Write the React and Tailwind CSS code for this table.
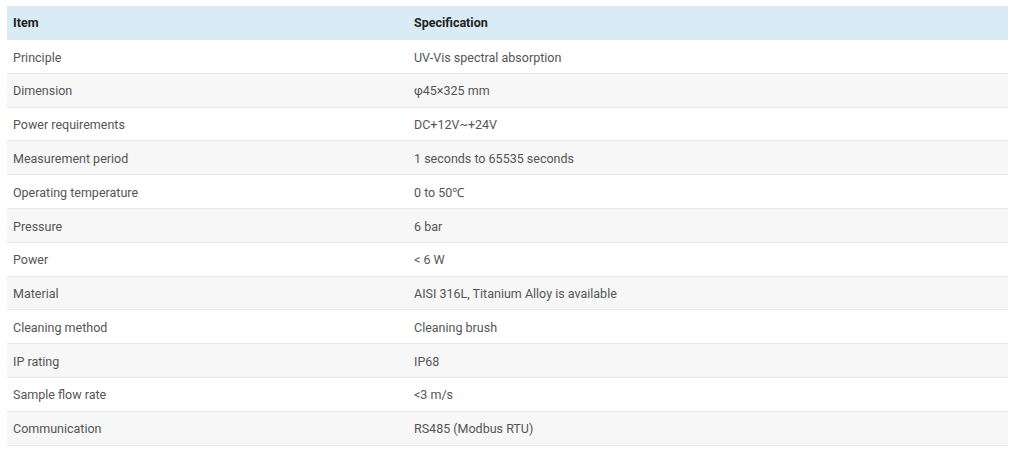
const rows = [
  ['Principle', 'UV-Vis spectral absorption'],
  ['Dimension', 'φ45×325 mm'],
  ['Power requirements', 'DC+12V~+24V'],
  ['Measurement period', '1 seconds to 65535 seconds'],
  ['Operating temperature', '0 to 50℃'],
  ['Pressure', '6 bar'],
  ['Power', '< 6 W'],
  ['Material', 'AISI 316L, Titanium Alloy is available'],
  ['Cleaning method', 'Cleaning brush'],
  ['IP rating', 'IP68'],
  ['Sample flow rate', '<3 m/s'],
  ['Communication', 'RS485 (Modbus RTU)'],
];

export default function App() {
  return (
    <div className="w-[1024px] h-[453px] bg-white pt-[6px] pl-[7px] font-['Roboto',sans-serif]">
      <div className="w-[1001px]">
        <div className="flex h-[34px] items-center pt-[2px] bg-[#d9ecf5] border-b border-[#e6e6e6] text-[12.5px] font-bold text-[#222]">
          <div className="w-[401px] pl-[6px]">Item</div>
          <div className="flex-1 pl-[6px]">Specification</div>
        </div>
        {rows.map(([item, spec], i) => (
          <div
            key={item}
            className={`flex h-[33.8px] items-center pt-[3px] border-b border-[#e9e9e9] text-[12.5px] text-[#555] ${i % 2 ? 'bg-[#f7f7f7]' : 'bg-white'}`}
          >
            <div className="w-[401px] pl-[6px]">{item}</div>
            <div className="flex-1 pl-[6px]">{spec}</div>
          </div>
        ))}
      </div>
    </div>
  );
}
